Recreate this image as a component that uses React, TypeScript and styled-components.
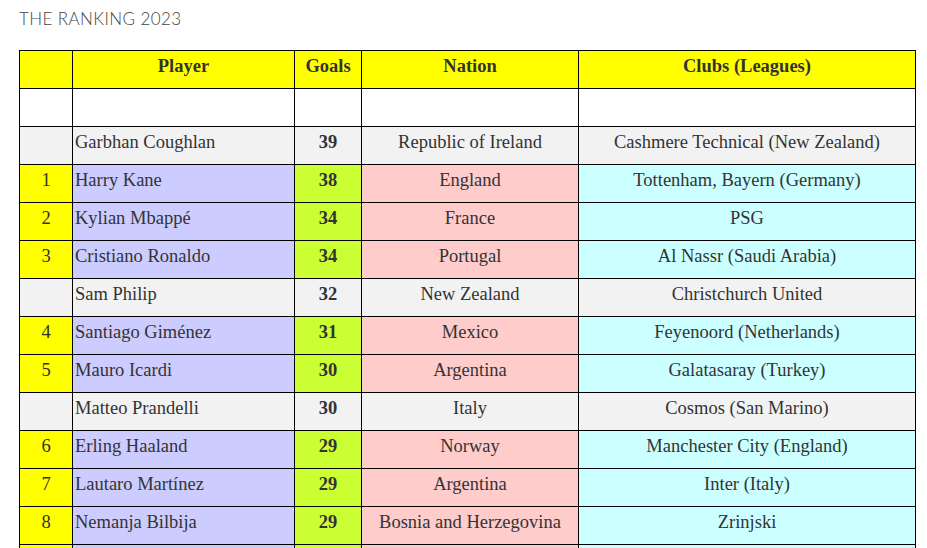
import React from "react";
import styled, { createGlobalStyle } from "styled-components";

const Global = createGlobalStyle`
  html, body { margin: 0; padding: 0; background: #fff; }
`;

const Page = styled.div`
  padding: 9px 19px 0 19px;
`;

const Title = styled.h2`
  margin: 0 0 21px 0;
  font-family: Lato, "Open Sans", sans-serif;
  font-weight: 300;
  font-size: 17px;
  line-height: 20px;
  color: #444;
  letter-spacing: 0.4px;
`;

const Table = styled.table`
  border-collapse: collapse;
  table-layout: fixed;
  width: 896px;
  font-family: "Liberation Serif", "Times New Roman", serif;
  font-size: 18.5px;
  color: #333;
`;

type Tone = "blank" | "rank" | "grey" | "player" | "goals" | "nation" | "club";

const bg: Record<Tone, string> = {
  rank: "#ffff00",
  blank: "#ffffff",
  grey: "#f2f2f2",
  player: "#ccccff",
  goals: "#ccff33",
  nation: "#ffcccc",
  club: "#ccffff",
};

const Cell = styled.td<{ $tone: Tone; $left?: boolean; $bold?: boolean }>`
  border: 1px solid #000;
  height: 38px;
  padding: 0 2px 6px 2px;
  box-sizing: border-box;
  background: ${(p) => bg[p.$tone]};
  text-align: ${(p) => (p.$left ? "left" : "center")};
  font-weight: ${(p) => (p.$bold ? 700 : 400)};
  vertical-align: middle;
  white-space: nowrap;
  overflow: hidden;
`;

const HeadCell = styled.th`
  border: 1px solid #000;
  height: 38px;
  padding: 0 2px 6px 2px;
  box-sizing: border-box;
  background: #ffff00;
  text-align: center;
  font-weight: 700;
  color: #333;
  vertical-align: middle;
`;

type Row = { rank?: string; player: string; goals: string; nation: string; club: string };

const rows: Row[] = [
  { player: "Garbhan Coughlan", goals: "39", nation: "Republic of Ireland", club: "Cashmere Technical (New Zealand)" },
  { rank: "1", player: "Harry Kane", goals: "38", nation: "England", club: "Tottenham, Bayern (Germany)" },
  { rank: "2", player: "Kylian Mbappé", goals: "34", nation: "France", club: "PSG" },
  { rank: "3", player: "Cristiano Ronaldo", goals: "34", nation: "Portugal", club: "Al Nassr (Saudi Arabia)" },
  { player: "Sam Philip", goals: "32", nation: "New Zealand", club: "Christchurch United" },
  { rank: "4", player: "Santiago Giménez", goals: "31", nation: "Mexico", club: "Feyenoord (Netherlands)" },
  { rank: "5", player: "Mauro Icardi", goals: "30", nation: "Argentina", club: "Galatasaray (Turkey)" },
  { player: "Matteo Prandelli", goals: "30", nation: "Italy", club: "Cosmos (San Marino)" },
  { rank: "6", player: "Erling Haaland", goals: "29", nation: "Norway", club: "Manchester City (England)" },
  { rank: "7", player: "Lautaro Martínez", goals: "29", nation: "Argentina", club: "Inter (Italy)" },
  { rank: "8", player: "Nemanja Bilbija", goals: "29", nation: "Bosnia and Herzegovina", club: "Zrinjski" },
  { rank: " ", player: "", goals: "", nation: "", club: "" },
];

export default function App() {
  return (
    <>
      <Global />
      <Page>
        <Title>THE RANKING 2023</Title>
        <Table>
          <colgroup>
            <col style={{ width: 53 }} />
            <col style={{ width: 222 }} />
            <col style={{ width: 67 }} />
            <col style={{ width: 217 }} />
            <col style={{ width: 337 }} />
          </colgroup>
          <thead>
            <tr>
              <HeadCell></HeadCell>
              <HeadCell>Player</HeadCell>
              <HeadCell>Goals</HeadCell>
              <HeadCell>Nation</HeadCell>
              <HeadCell>Clubs (Leagues)</HeadCell>
            </tr>
          </thead>
          <tbody>
            <tr>
              <Cell $tone="blank"></Cell>
              <Cell $tone="blank"></Cell>
              <Cell $tone="blank"></Cell>
              <Cell $tone="blank"></Cell>
              <Cell $tone="blank"></Cell>
            </tr>
            {rows.map((r, i) => {
              const ranked = !!r.rank;
              return (
                <tr key={i}>
                  <Cell $tone={ranked ? "rank" : "grey"}>{(r.rank ?? "").trim()}</Cell>
                  <Cell $tone={ranked ? "player" : "grey"} $left>{r.player}</Cell>
                  <Cell $tone={ranked ? "goals" : "grey"} $bold>{r.goals}</Cell>
                  <Cell $tone={ranked ? "nation" : "grey"}>{r.nation}</Cell>
                  <Cell $tone={ranked ? "club" : "grey"}>{r.club}</Cell>
                </tr>
              );
            })}
          </tbody>
        </Table>
      </Page>
    </>
  );
}
